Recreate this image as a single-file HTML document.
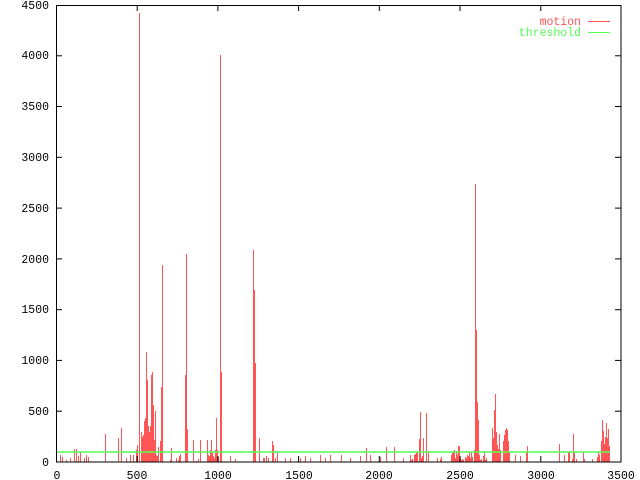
<!DOCTYPE html>
<html><head><meta charset="utf-8"><style>
html,body{margin:0;padding:0;background:#fff;}
svg{display:block;}
text{font-family:"Liberation Mono","DejaVu Sans Mono",monospace;font-size:11.5px;}
</style></head><body>
<svg id="s" width="640" height="480" viewBox="0 0 640 480" xmlns="http://www.w3.org/2000/svg">
<g id="bars" fill="#ff5555"></g>
<line x1="56" y1="452" x2="610" y2="452" stroke="#55ff55" stroke-width="1.5"/>
<rect x="56.5" y="5.5" width="564.5" height="456.5" fill="none" stroke="#000" stroke-width="1"/>
<g id="ticks" stroke="#000" stroke-width="1"></g>
<g fill="#000" text-anchor="end">
<text x="49" y="466">0</text>
<text x="49" y="415">500</text>
<text x="49" y="364">1000</text>
<text x="49" y="313">1500</text>
<text x="49" y="263">2000</text>
<text x="49" y="212">2500</text>
<text x="49" y="161">3000</text>
<text x="49" y="110">3500</text>
<text x="49" y="59">4000</text>
<text x="49" y="9">4500</text>
</g>
<g fill="#000" text-anchor="middle">
<text x="57" y="479">0</text>
<text x="137" y="479">500</text>
<text x="218" y="479">1000</text>
<text x="299" y="479">1500</text>
<text x="379" y="479">2000</text>
<text x="460" y="479">2500</text>
<text x="541" y="479">3000</text>
<text x="621" y="479">3500</text>
</g>
<text x="581" y="25" fill="#ff5555" text-anchor="end">motion</text>
<line x1="588" y1="21.5" x2="610" y2="21.5" stroke="#ff5555"/>
<text x="581" y="36" fill="#55ff55" text-anchor="end">threshold</text>
<line x1="588" y1="32.5" x2="610" y2="32.5" stroke="#55ff55"/>
</svg>
<script>
var d=[[60,455],[62,457],[66,460],[70,458],[74,449],[76,449],[78,456],[80,452],[84,458],[86,455],[88,457],[105,434],[118,438],[121,428],[126,458],[130,455],[133,455],
[136,450],[137,445],[139,13],[141,432],[142,437],[143,435],[144,421],[145,418],[146,352],[147,380],[148,426],[149,432],[150,426],[151,375],[152,372],[153,405],[154,440],[155,411],[156,455],[157,456],[158,447],[160,441],[161,387],[162,265],
[170,460],[171,448],[176,458],[178,460],[179,456],[180,454],[185,375],[186,254],[187,429],[193,440],[196,461],[198,459],[200,440],
[207,440],[208,455],[209,456],[210,450],[211,440],[212,452],[213,456],[214,458],[215,450],[216,418],[217,450],[218,457],[220,55],[221,372],
[230,456],[235,459],[253,250],[254,290],[255,363],[259,438],[263,458],[264,458],[266,456],[268,458],[272,441],[273,445],[275,458],[277,453],
[285,458],[290,458],[300,458],[305,456],[310,458],[320,455],[325,458],[330,455],[341,455],[350,458],[360,456],[366,448],[370,455],[380,457],[386,447],[394,447],[403,458],[410,455],
[411,460],[412,459],[414,455],[415,454],[416,452],[417,453],[419,439],[420,412],[421,458],[422,456],[423,438],[426,413],[428,451],[437,458],[440,459],[441,457],
[451,455],[452,453],[453,452],[454,450],[455,458],[456,451],[457,455],[458,446],[459,446],[460,458],[461,460],[462,459],[463,460],[465,457],[466,458],[467,455],[468,456],[469,452],[470,458],[471,452],[472,457],[474,450],[475,184],[476,330],[477,402],[478,420],[479,455],
[480,460],[481,459],[483,456],[484,452],[485,460],[486,458],[492,428],[493,438],[494,410],[495,394],[496,432],[497,445],[498,449],[499,434],[500,450],[503,441],[504,435],[505,430],[506,428],[507,430],[508,441],[509,452],[515,455],[520,456],[526,452],[527,446],
[559,444],[564,455],[568,452],[569,451],[572,459],[573,434],[574,452],[576,459],[583,452],[584,459],[592,459],[597,457],[598,452],[599,455],[601,441],[602,420],[603,431],[604,444],[605,437],[606,423],[607,438],[608,429],[609,446]];
var g=document.getElementById('bars'),h='';
d.forEach(function(b){h+='<rect x="'+b[0]+'" y="'+b[1]+'" width="1" height="'+(462-b[1])+'"/>';});
g.innerHTML=h;
var t=document.getElementById('ticks'),s='';
for(var i=1;i<9;i++){var y=(462-i*50.78).toFixed(1);s+='<line x1="56" y1="'+y+'" x2="62" y2="'+y+'"/><line x1="615" y1="'+y+'" x2="621" y2="'+y+'"/>';}
for(var j=1;j<7;j++){var x=(56.5+j*80.71).toFixed(1);s+='<line x1="'+x+'" y1="462" x2="'+x+'" y2="456"/><line x1="'+x+'" y1="5" x2="'+x+'" y2="11"/>';}
t.innerHTML=s;
</script>
</body></html>
